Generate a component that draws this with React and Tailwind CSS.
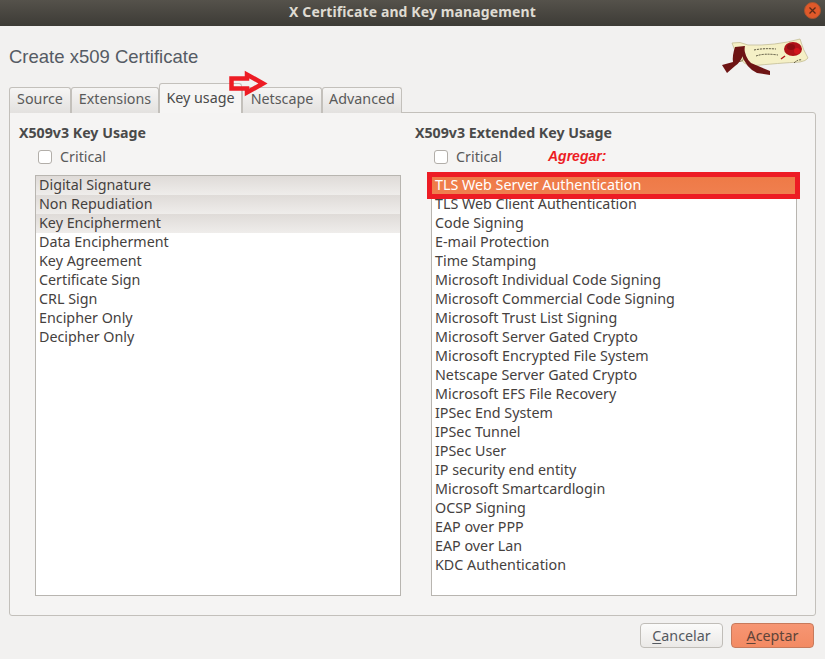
import React from "react";

const keyUsage = [
  "Digital Signature",
  "Non Repudiation",
  "Key Encipherment",
  "Data Encipherment",
  "Key Agreement",
  "Certificate Sign",
  "CRL Sign",
  "Encipher Only",
  "Decipher Only",
];

const extendedUsage = [
  "TLS Web Client Authentication",
  "Code Signing",
  "E-mail Protection",
  "Time Stamping",
  "Microsoft Individual Code Signing",
  "Microsoft Commercial Code Signing",
  "Microsoft Trust List Signing",
  "Microsoft Server Gated Crypto",
  "Microsoft Encrypted File System",
  "Netscape Server Gated Crypto",
  "Microsoft EFS File Recovery",
  "IPSec End System",
  "IPSec Tunnel",
  "IPSec User",
  "IP security end entity",
  "Microsoft Smartcardlogin",
  "OCSP Signing",
  "EAP over PPP",
  "EAP over Lan",
  "KDC Authentication",
];

const Row = ({ children, selected }) => (
  <div className={`h-[19px] pl-[3px] leading-[17px] whitespace-nowrap ${selected ? "bg-gradient-to-b from-[#dfdbd8] to-[#efedeb]" : ""}`}>
    {children}
  </div>
);

const Tab = ({ children, className }) => (
  <div className={`h-[26px] mt-[1px] border border-b-0 border-[#c3c0bb] rounded-t-[3px] bg-gradient-to-b from-[#f6f5f4] to-[#e3e1df] text-center leading-[22px] text-[#5a5a5a] ${className}`}>
    {children}
  </div>
);

const Critical = () => (
  <div className="flex items-center h-[19px] mt-[4px] ml-[19px] gap-[8px]">
    <div className="w-[14px] h-[14px] rounded-[3px] border border-[#b2aea9] bg-white" />
    <span className="text-[#5a5a5a]">Critical</span>
  </div>
);

const Logo = () => (
  <svg width="90" height="40" viewBox="0 0 90 40">
    <path d="M12 5 Q20 3 28 7 Q55 8 80 1 Q83 12 88 20 Q86 23 80 24 Q60 25 30 28 Q18 24 12 5Z" fill="#f5f0c6" stroke="#bdb68c" strokeWidth="0.7" />
    <circle cx="20" cy="20" r="3.5" fill="none" stroke="#8a8050" strokeWidth="1" />
    <path d="M15 9 Q12 18 13 24 L2 27 L7 35 L15 28 Q21 24 23 17 L25 8Z" fill="#6e1414" />
    <path d="M24 8 Q25 20 31 25 L50 33 L50 37 L37 35 Q26 30 21 15Z" fill="#6e1414" />
    <ellipse cx="73" cy="11" rx="9" ry="7" fill="#b01218" />
    <ellipse cx="71" cy="9" rx="4" ry="3" fill="#8e0d12" />
    <ellipse cx="77" cy="13" rx="3" ry="3" fill="#d3151c" />
    <path d="M34 12 Q44 10 56 11 M36 18 Q44 15 58 17 M74 25 Q78 21 82 22" fill="none" stroke="#4f4a36" strokeWidth="1" strokeDasharray="2 1" />
    <path d="M61 21 L65 18" stroke="#b01218" strokeWidth="1.4" />
  </svg>
);

const App = () => {
  return (
    <div className="relative w-[825px] h-[659px] overflow-hidden bg-[#f2f1f0] text-[14.3px] text-[#3c3c3c] font-['Noto_Sans','Open_Sans',sans-serif]">
      {/* title bar */}
      <div className="relative h-[26px] bg-gradient-to-b from-[#55524b] to-[#3d3b36] text-center text-[14px] font-bold tracking-[0.12px] leading-[23px] text-[#dfdbd2]">
        X Certificate and Key management
        <div className="absolute right-[4px] top-[2px] flex w-[17px] h-[17px] items-center justify-center rounded-full bg-[#e0592a] border border-[#a8542f]">
          <svg width="9" height="9" viewBox="0 0 9 9">
            <path d="M1.5 1.5 L7.5 7.5 M7.5 1.5 L1.5 7.5" stroke="#5a2a18" strokeWidth="1.3" />
          </svg>
        </div>
      </div>

      {/* header */}
      <div className="flex h-[60px] justify-between pl-[9px] pr-[15px]">
        <div className="mt-[19px] text-[18.5px] leading-[24px] text-[#555b64] font-['Liberation_Sans',sans-serif]">Create x509 Certificate</div>
        <div className="mt-[12px]"><Logo /></div>
      </div>

      {/* tabs */}
      <div className="relative z-10 flex h-[27px] items-end pl-[9px] -mb-[1px]">
        <Tab className="w-[62px]">Source</Tab>
        <Tab className="w-[88px]">Extensions</Tab>
        <div className="w-[83px] h-[30px] border border-b-0 border-[#c3c0bb] rounded-t-[3px] bg-[#f6f5f4] text-center leading-[27px] text-[#4a4a4a]">Key usage</div>
        <Tab className="w-[80px]">Netscape</Tab>
        <Tab className="w-[80px]">Advanced</Tab>
      </div>

      {/* panel */}
      <div className="ml-[9px] w-[807px] h-[504px] flex border border-[#c3c0bb] rounded-b-[3px] rounded-tr-[3px] bg-[#f5f4f3]">
        <div className="w-[396px] pl-[9px]">
          <div className="mt-[10px] font-bold text-[14.2px] leading-[20px] text-[#4a4a4a]">X509v3 Key Usage</div>
          <Critical />
          <div className="ml-[16px] mt-[9px] w-[366px] h-[421px] border border-[#b8b5b0] bg-white text-[#45413e]">
            {keyUsage.map((name, i) => (
              <Row key={name} selected={i < 3}>{name}</Row>
            ))}
          </div>
        </div>
        <div className="w-[396px] pl-[9px]">
          <div className="mt-[10px] font-bold text-[14.2px] leading-[20px] text-[#4a4a4a]">X509v3 Extended Key Usage</div>
          <div className="relative">
            <Critical />
            <span className="absolute left-[133px] top-[-1px] text-[14px] font-bold italic text-[#ed1c24] font-['Liberation_Sans',sans-serif]">Agregar:</span>
          </div>
          <div className="relative ml-[16px] mt-[9px] w-[366px] h-[421px] border border-[#b8b5b0] bg-white text-[#45413e]">
            <div className="h-[19px] pl-[3px] leading-[17px] whitespace-nowrap bg-gradient-to-b from-[#ee7a46] to-[#f07f4f] text-white">TLS Web Server Authentication</div>
            {extendedUsage.map((name) => (
              <Row key={name}>{name}</Row>
            ))}
            <div className="absolute left-[-5px] top-[-4px] w-[373px] h-[27px] border-[5px] border-[#ed1c24]" />
          </div>
        </div>
      </div>

      {/* buttons */}
      <div className="flex justify-end gap-[8px] mt-[7px] pr-[11px]">
        <button className="w-[83px] h-[25px] rounded-[4px] border border-[#c0bdb8] bg-gradient-to-b from-[#fbfbfa] to-[#ebe9e7] text-[#55595f] leading-[21px]">
          <span className="underline underline-offset-2">C</span>ancelar
        </button>
        <button className="w-[83px] h-[25px] rounded-[4px] border border-[#c77a5c] bg-gradient-to-b from-[#f69673] to-[#f38a63] text-[#5f4439] leading-[21px]">
          <span className="underline underline-offset-2">A</span>ceptar
        </button>
      </div>

      {/* red arrow annotation */}
      <svg className="absolute z-20 left-[228px] top-[70px]" width="40" height="28" viewBox="0 0 40 28">
        <path d="M3.5 8.5 H19 V4.5 L35 13.5 L19 22.5 V18.5 H3.5 Z" fill="none" stroke="#ed1c24" strokeWidth="4.5" />
      </svg>
    </div>
  );
};

export default App;
